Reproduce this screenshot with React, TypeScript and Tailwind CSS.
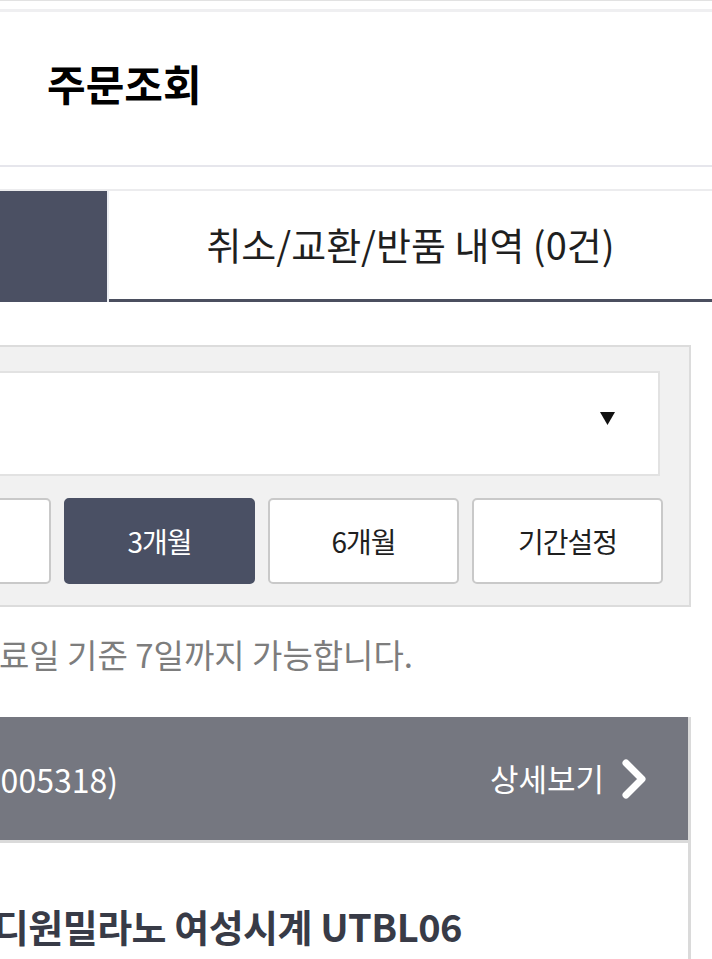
import React from "react";

const periods = [
  { label: "1개월", active: false },
  { label: "3개월", active: true },
  { label: "6개월", active: false },
  { label: "기간설정", active: false },
];

function Chevron() {
  return (
    <svg width="28" height="42" viewBox="0 0 28 42" fill="none">
      <polyline
        points="6,5 22,21 6,37"
        stroke="#ffffff"
        strokeWidth="7"
        strokeLinecap="round"
        strokeLinejoin="round"
      />
    </svg>
  );
}

function Caret() {
  return (
    <svg width="15" height="13" viewBox="0 0 15 13">
      <polygon points="0,0 15,0 7.5,13" fill="#111111" />
    </svg>
  );
}

export default function App() {
  return (
    <div className="w-[712px] min-h-[959px] overflow-hidden bg-white font-['Noto_Sans_CJK_KR',sans-serif]">
      {/* top rules */}
      <div className="h-px bg-[#e2e2e2]" />
      <div className="h-2" />
      <div className="h-[3px] bg-[#efeff1]" />

      {/* page title */}
      <header className="flex h-[153px] items-center pb-[12px] pl-[47px]">
        <h1 className="text-[42px] font-bold leading-none text-black">주문조회</h1>
      </header>
      <div className="h-[2px] bg-[#e6e6ec]" />
      <div className="h-[22px]" />
      <div className="h-[2px] bg-[#ececee]" />

      {/* tabs */}
      <nav className="flex h-[111px]">
        <div className="w-[107px] shrink-0 bg-[#4b5063]" />
        <div className="w-[2px] shrink-0 bg-[#eceef3]" />
        <div className="flex flex-1 items-center justify-center border-b-[3px] border-[#4b4f5f] pb-[4px] text-[38px] text-[#1f1f1f]">
          취소/교환/반품 내역 (0건)
        </div>
      </nav>

      {/* search filter */}
      <section className="-ml-[40px] mr-[21px] mt-[43px] border-2 border-[#dcdcdc] bg-[#f1f1f1] pb-[21px] pr-[26px] pt-[24px]">
        <div className="mr-[3px] flex h-[105px] items-center justify-end border-2 border-[#e2e2e2] bg-white pb-[10px] pr-[43px]">
          <Caret />
        </div>
        <div className="mt-[22px] flex justify-end gap-[13px]">
          {periods.map((p) => (
            <button
              key={p.label}
              className={
                p.active
                  ? "flex h-[86px] w-[191px] shrink-0 items-center justify-center rounded-[5px] border-2 border-[#4a5064] bg-[#4a5064] text-[28px] tracking-[-1px] text-white"
                  : "flex h-[86px] w-[191px] shrink-0 items-center justify-center rounded-[5px] border-2 border-[#c9c9c9] bg-white text-[28px] tracking-[-1px] text-[#1f1f1f]"
              }
            >
              {p.label}
            </button>
          ))}
        </div>
      </section>

      {/* notice */}
      <div className="mt-[29px] flex w-[413px] justify-end whitespace-nowrap">
        <p className="text-[33px] leading-[36px] text-[#7d7d7d]">
          교환/반품 신청은 배송완료일 기준 7일까지 가능합니다.
        </p>
      </div>

      {/* order card */}
      <article className="mr-[21px] mt-[45px] border-r-[3px] border-[#dadada]">
        <div className="flex h-[126px] items-center justify-between border-b-[3px] border-[#dadada] bg-[#757780] pr-[40px]">
          <div className="flex w-[118px] justify-end whitespace-nowrap">
            <span className="text-[32px] text-white">주문번호 (20190613005318)</span>
          </div>
          <div className="flex items-center gap-[16px]">
            <span className="text-[31px] text-white">상세보기</span>
            <Chevron />
          </div>
        </div>
        <div className="pb-[40px] pt-[61px]">
          <div className="flex w-[462px] justify-end whitespace-nowrap">
            <span className="text-[38px] font-semibold leading-[44px] tracking-[-0.5px] text-[#383b47]">
              디원밀라노 여성시계 UTBL06
            </span>
          </div>
        </div>
      </article>
    </div>
  );
}
